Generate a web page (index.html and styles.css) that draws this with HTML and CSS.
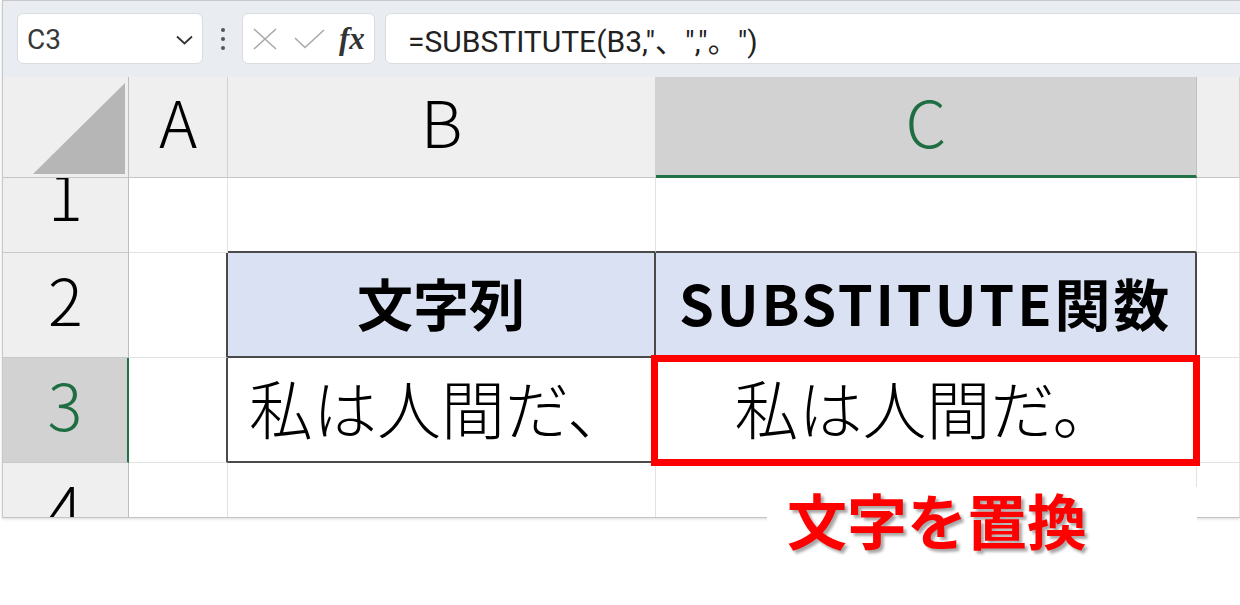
FILE: index.html
```html
<!DOCTYPE html>
<html lang="ja">
<head>
    <meta charset="UTF-8">
    <title>SUBSTITUTE関数</title>
    <link rel="stylesheet" href="styles.css">
</head>
<body>
    <div class="window">
        <div class="formula-bar">
            <div class="name-box">
                <span>C3</span>
                <svg width="17" height="10" viewBox="0 0 17 10"><polyline points="1,1.5 8.5,8.5 16,1.5" fill="none" stroke="#333" stroke-width="1.8"/></svg>
            </div>
            <div class="grip"><i></i><i></i><i></i></div>
            <div class="fx-box">
                <svg width="24" height="22" viewBox="0 0 24 22"><path d="M1 1L23 21M23 1L1 21" stroke="#a9a9a9" stroke-width="1.6" fill="none"/></svg>
                <svg width="31" height="20" viewBox="0 0 31 20"><polyline points="1,9 11,18.5 30,1" fill="none" stroke="#a9a9a9" stroke-width="1.6"/></svg>
                <span class="fx">fx</span>
            </div>
            <div class="formula">=SUBSTITUTE(B3,"、","。")</div>
        </div>

        <div class="sheet">
            <div class="corner"><div class="tri"></div></div>
            <div class="col-head">A</div>
            <div class="col-head">B</div>
            <div class="col-head active">C</div>
            <div class="col-head"></div>

            <div class="row-head clip">1</div>
            <div class="cell"></div>
            <div class="cell db"></div>
            <div class="cell db"></div>
            <div class="cell"></div>

            <div class="row-head">2</div>
            <div class="cell dr"></div>
            <div class="cell hdr dr db">文字列</div>
            <div class="cell hdr wide dr db">SUBSTITUTE関数</div>
            <div class="cell"></div>

            <div class="row-head active">3</div>
            <div class="cell dr"></div>
            <div class="cell val dr db">私は人間だ、</div>
            <div class="cell val mid dr db">私は人間だ。</div>
            <div class="cell"></div>

            <div class="row-head clip cut">4</div>
            <div class="cell last"></div>
            <div class="cell last"></div>
            <div class="cell last"></div>
            <div class="cell last"></div>
        </div>

        <div class="highlight"></div>
        <div class="callout">文字を置換</div>
    </div>
</body>
</html>
```

FILE: styles.css
```css
* {
    box-sizing: border-box;
}

html, body {
    min-height: 605px;
}

body {
    margin: 0;
    background: #fff;
    font-family: "Noto Sans CJK JP", sans-serif;
    color: #000;
}

.window {
    position: relative;
    width: 1238px;
    height: 518px;
    margin-left: 2px;
    border-top: 1px solid #c8c8c8;
    border-left: 1px solid #c8c8c8;
    border-bottom: 1px solid #c4c4c4;
    box-shadow: 0 1px 3px rgba(0,0,0,0.15);
}

/* formula bar */
.formula-bar {
    height: 76px;
    background: #e9ecf0;
    display: flex;
    align-items: flex-start;
    padding: 12px 0 0 14px;
    overflow: hidden;
}

.name-box,
.fx-box,
.formula {
    height: 51px;
    background: #fff;
    border: 1px solid #d9dce0;
    border-radius: 6px;
    display: flex;
    align-items: center;
}

.name-box {
    width: 186px;
    justify-content: space-between;
    padding: 2px 9px 0 9px;
    font-family: Roboto, sans-serif;
    font-size: 28px;
    color: #383838;
}

.grip {
    width: 39px;
    height: 51px;
    display: flex;
    flex-direction: column;
    align-items: center;
    justify-content: center;
    gap: 5px;
}

.grip i {
    width: 4px;
    height: 4px;
    border-radius: 50%;
    background: #555;
}

.fx-box {
    width: 133px;
    padding-left: 10px;
    gap: 17px;
}

.fx {
    font-family: "Liberation Serif", serif;
    font-style: italic;
    font-weight: bold;
    font-size: 31px;
    color: #333;
    margin-left: -3px;
}

.formula {
    flex: 1;
    margin-left: 10px;
    margin-right: -10px;
    padding-left: 22px;
    font-family: Roboto, "Noto Sans CJK JP", sans-serif;
    font-size: 30px;
    color: #222;
}

/* sheet grid */
.sheet {
    height: 440px;
    display: grid;
    grid-template-columns: 126px 99px 428px 541px 1fr;
    grid-template-rows: 101px 75px 105px 105px 54px;
    background: #fff;
}

.sheet > div {
    display: flex;
    align-items: flex-end;
    justify-content: center;
    line-height: 1;
    white-space: nowrap;
}

.corner {
    background: #efefef;
    border-right: 1px solid #bdbdbd;
    border-bottom: 1px solid #c4c4c4;
    justify-content: flex-end !important;
    padding: 0 3px 3px 0;
}

.tri {
    width: 92px;
    height: 91px;
    background: #b6b6b6;
    clip-path: polygon(100% 0, 100% 100%, 0 100%);
}

.col-head {
    background: #efefef;
    border-right: 1px solid #d2d2d2;
    border-bottom: 1px solid #c4c4c4;
    font-size: 65px;
    font-weight: 300;
    padding-bottom: 24px;
}

.col-head.active {
    background: #d2d2d2;
    color: #1e6e42;
    border-right-color: #c0c0c0;
    border-bottom: 3px solid #217346;
    padding-bottom: 22px;
}

.row-head {
    background: #efefef;
    border-right: 1px solid #bdbdbd;
    border-bottom: 1px solid #c8c8c8;
    font-size: 65px;
    font-weight: 300;
    padding-bottom: 26px;
}

.row-head.clip {
    overflow: hidden;
}

.row-head.active {
    background: #d2d2d2;
    color: #1e6e42;
    border-right: 2px solid #217346;
}

/* last row is cut off by the window edge */
.row-head.cut {
    align-items: flex-start !important;
    padding: 11px 0 0 0;
    border-bottom: none;
}

.cell {
    border-right: 1px solid #e2e2e2;
    border-bottom: 1px solid #e2e2e2;
}

.cell.last {
    border-bottom: none;
}

.cell.dr {
    border-right: 2px solid #4a4a4a;
}

.cell.db {
    border-bottom: 2px solid #4a4a4a;
}

.hdr {
    background: #d9e1f2;
    font-size: 56px;
    font-weight: 700;
    padding-bottom: 26px;
}

.hdr.wide {
    letter-spacing: 2.8px;
}

.val {
    font-size: 64px;
    font-weight: 300;
    padding-bottom: 23px;
    justify-content: flex-start !important;
    padding-left: 21px;
}

.val.mid {
    justify-content: center !important;
    padding-left: 0;
}

/* annotations on top of the sheet */
.highlight {
    position: absolute;
    left: 648px;
    top: 354px;
    width: 549px;
    height: 111px;
    border: 7px solid #ff0000;
}

.callout {
    position: absolute;
    left: 764px;
    top: 486px;
    width: 430px;
    height: 80px;
    background: #fff;
    padding: 2px 0 0 20px;
    font-size: 60px;
    font-weight: 700;
    line-height: 1;
    color: #ff0000;
    text-shadow: 3px 3px 3px rgba(0,0,0,0.35);
}
```
